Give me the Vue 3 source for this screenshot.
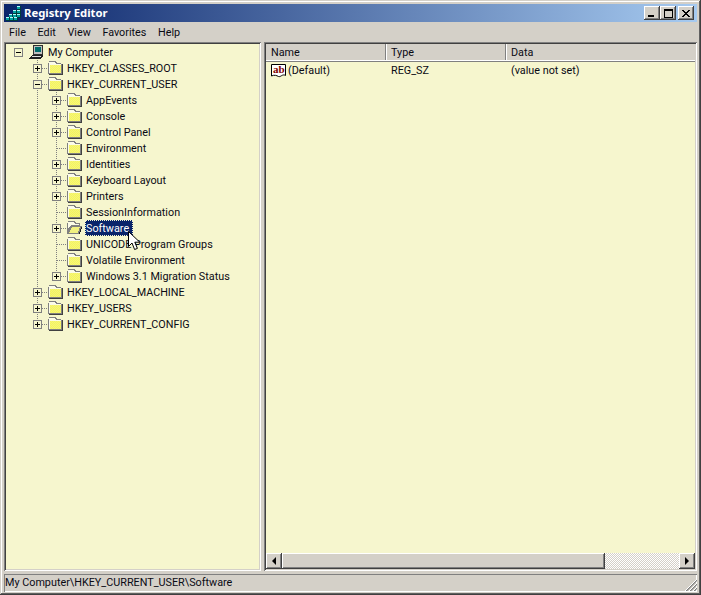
<script setup>
const menus = ['File', 'Edit', 'View', 'Favorites', 'Help']
const raw = [
  ['My Computer', 0, '-', 'pc'],
  ['HKEY_CLASSES_ROOT', 1, '+'],
  ['HKEY_CURRENT_USER', 1, '-'],
  ['AppEvents', 2, '+'],
  ['Console', 2, '+'],
  ['Control Panel', 2, '+'],
  ['Environment', 2, ''],
  ['Identities', 2, '+'],
  ['Keyboard Layout', 2, '+'],
  ['Printers', 2, '+'],
  ['SessionInformation', 2, ''],
  ['Software', 2, '+', 'open'],
  ['UNICODE Program Groups', 2, ''],
  ['Volatile Environment', 2, ''],
  ['Windows 3.1 Migration Status', 2, '+', 'folder', true],
  ['HKEY_LOCAL_MACHINE', 1, '+'],
  ['HKEY_USERS', 1, '+'],
  ['HKEY_CURRENT_CONFIG', 1, '+', 'folder', true],
]
const rows = raw.map(([label, depth, exp, icon = 'folder', last = false]) => {
  const cells = []
  for (let i = 0; i <= depth; i++) {
    if (i === depth) cells.push({ type: depth === 0 ? 'blank' : last ? 'ell' : 'tee', exp })
    else cells.push({ type: i === 1 ? 'pass' : 'blank', exp: '' })
  }
  return { label, icon, cells, selected: label === 'Software' }
})
let dots = ''
for (let y = 5; y < 13; y++) {
  for (let x = 3; x < 14; x++) {
    if ((x + y) % 2 === 0) dots += `M${x} ${y}h1v1h-1z`
  }
}
const cubes = [
  [11, 1], [7, 5], [11, 5], [3, 9], [7, 9], [11, 9], [0, 12], [4, 12], [8, 12],
]
</script>

<template>
  <div class="window">
    <header class="title">
      <svg class="logo" width="16" height="16" viewBox="0 0 16 16" shape-rendering="crispEdges">
        <g v-for="(c, i) in cubes" :key="i">
          <rect :x="c[0]" :y="c[1]" width="4" height="4" fill="#00a0a0" />
          <rect :x="c[0]" :y="c[1]" width="3" height="1" fill="#b8f8f8" />
          <rect :x="c[0] + 3" :y="c[1]" width="1" height="4" fill="#003c3c" />
          <rect :x="c[0]" :y="c[1] + 3" width="4" height="1" fill="#003c3c" />
        </g>
      </svg>
      <span class="title-text">Registry Editor</span>
      <div class="controls">
        <button class="ctl raised">
          <svg width="8" height="8" viewBox="0 0 8 8" shape-rendering="crispEdges"><rect x="0" y="6" width="6" height="2" /></svg>
        </button>
        <button class="ctl raised">
          <svg width="9" height="9" viewBox="0 0 9 9" shape-rendering="crispEdges"><path d="M0 0h9v9H0z M1 2v6h7V2z" fill-rule="evenodd" /></svg>
        </button>
        <button class="ctl raised close">
          <svg width="8" height="7" viewBox="0 0 8 7" shape-rendering="crispEdges"><path d="M0 0h2v1h1v1h2V1h1V0h2v1H7v1H6v1H5v1h1v1h1v1h1v1H6V6H5V5H3v1H2v1H0V6h1V5h1V4h1V3H2V2H1V1H0z" /></svg>
        </button>
      </div>
    </header>

    <nav class="menu">
      <span v-for="m in menus" :key="m" class="menu-item">{{ m }}</span>
    </nav>

    <main class="panes">
      <section class="tree sunken">
        <div v-for="r in rows" :key="r.label" class="row">
          <span v-for="(c, i) in r.cells" :key="i" class="cell" :class="c.type">
            <span v-if="c.exp" class="box">
              <i class="bar-h"></i>
              <i v-if="c.exp === '+'" class="bar-v"></i>
            </span>
          </span>
          <svg v-if="r.icon === 'folder'" class="ico" width="16" height="16" viewBox="0 0 16 16" shape-rendering="crispEdges">
            <path d="M2 1h6l2 2h4v1h1v10H1V3h1z" fill="#808080" />
            <path d="M2 2h5l2 2h5v9H2z" fill="#fbfbe8" />
            <rect x="3" y="5" width="11" height="8" fill="#f4f47c" />
            <path :d="dots" fill="#f6f65c" />
            <rect x="15" y="4" width="1" height="10" fill="#404040" />
            <rect x="2" y="14" width="14" height="1" fill="#404040" />
          </svg>
          <svg v-else-if="r.icon === 'open'" class="ico" width="16" height="16" viewBox="0 0 16 16" shape-rendering="crispEdges">
            <path d="M2 1h6l2 2h4v3H5l-3 5H1V3h1z" fill="#808080" />
            <path d="M2 2h5l2 2h4v1H5L2 9z" fill="#fbfbe8" />
            <path d="M5 6h11v1l-3 7H1v-2z" fill="#808080" />
            <path d="M6 7h8l-2 6H3z" fill="#f0f080" />
            <path d="M15 7h1v1l-2 6h-1z" fill="#202020" />
          </svg>
          <svg v-else class="ico" width="16" height="16" viewBox="0 0 16 16" shape-rendering="crispEdges">
            <path d="M5 1h10v10H5z" fill="#303030" />
            <path d="M6 2h8v8H6z" fill="#c0c0c0" />
            <path d="M7 3h6v5H7z" fill="#006c6c" />
            <path d="M4 11h11v1l-2 3H1v-1z" fill="#202020" />
            <path d="M4 12h9l-1 1H3z" fill="#e0e0e0" />
          </svg>
          <span class="label" :class="{ selected: r.selected }">{{ r.label }}</span>
        </div>
        <svg class="cursor" width="14" height="20" viewBox="0 0 14 20">
          <path d="M0.5 0.5v15l3.5-3.5 2.6 6.5 2.8-1.1-2.6-6.2h5z" fill="#fff" stroke="#000" stroke-width="1" />
        </svg>
      </section>

      <section class="list sunken">
        <div class="head">
          <span class="th name">Name</span>
          <span class="th type">Type</span>
          <span class="th data">Data</span>
        </div>
        <div class="body">
          <div class="tr">
            <span class="td name first">
              <svg class="ab" width="16" height="14" viewBox="0 0 16 14">
                <path d="M0.5 0.5h14v11c-3 -2 -5 2 -7 1s-4 -2 -7 -0.5z" fill="#fff" stroke="#000" />
                <text x="2" y="9" class="ab-text">ab</text>
              </svg>
              <span>(Default)</span>
            </span>
            <span class="td type">REG_SZ</span>
            <span class="td data">(value not set)</span>
          </div>
        </div>
        <div class="hscroll">
          <button class="sb raised"><i class="tri left"></i></button>
          <div class="thumb raised"></div>
          <div class="track"></div>
          <button class="sb raised"><i class="tri right"></i></button>
        </div>
      </section>
    </main>

    <footer class="status">
      <span class="status-text">My Computer\HKEY_CURRENT_USER\Software</span>
      <svg class="grip" width="12" height="12" viewBox="0 0 12 12">
        <g v-for="o in [0, 4, 8]" :key="o">
          <path :d="`M${o + 1} 12 L12 ${o + 1}`" stroke="#808080" stroke-width="1.5" fill="none" />
          <path :d="`M${o} 12 L12 ${o}`" stroke="#ffffff" stroke-width="1" fill="none" />
        </g>
      </svg>
    </footer>
  </div>
</template>

<style scoped>
.window {
  width: 701px;
  height: 595px;
  box-sizing: border-box;
  padding: 4px 4px 3px;
  display: flex;
  flex-direction: column;
  background: #d4d0c8;
  box-shadow: inset -1px -1px #404040, inset 1px 1px #d4d0c8, inset -2px -2px #606060, inset 2px 2px #fff;
  font: 10.8px Roboto, "Noto Sans", sans-serif;
  color: #0a0a14;
}
.title {
  height: 18px;
  display: flex;
  align-items: center;
  background: linear-gradient(90deg, #0a246a, #a6caf0);
  padding: 0 3px 0 2px;
  flex: none;
}
.logo { flex: none; margin-right: 2px; }
.title-text { color: #fff; font: 700 11.3px/16px "Noto Sans", sans-serif; }
.controls { margin-left: auto; display: flex; }
.ctl {
  width: 16px;
  height: 14px;
  padding: 0;
  border: 0;
  display: flex;
  align-items: center;
  justify-content: center;
}
.ctl svg { fill: #000; }
.close { margin-left: 2px; }
.raised {
  background: #d4d0c8;
  box-shadow: inset -1px -1px #404040, inset 1px 1px #fff, inset -2px -2px #808080;
}
.menu {
  height: 20px;
  display: flex;
  align-items: center;
  flex: none;
  padding-left: 5px;
  gap: 11.6px;
}
.panes {
  flex: 1;
  min-height: 0;
  display: flex;
  gap: 3px;
}
.sunken {
  box-shadow: inset 1px 1px #808080, inset -1px -1px #fff, inset 2px 2px #404040, inset -2px -2px #d4d0c8;
}
.tree {
  width: 257px;
  flex: none;
  box-sizing: border-box;
  padding: 2px 2px 2px 5px;
  background: #f6f6ce;
  position: relative;
}
.row {
  height: 16px;
  display: flex;
  align-items: center;
}
.cell {
  width: 19px;
  height: 16px;
  flex: none;
  position: relative;
}
.pass::before, .tee::before, .ell::before {
  content: "";
  position: absolute;
  left: 9px;
  top: 0;
  width: 1px;
  height: 16px;
  background: repeating-linear-gradient(to bottom, #808080 0 1px, transparent 1px 2px);
}
.ell::before { height: 9px; }
.tee::after, .ell::after {
  content: "";
  position: absolute;
  left: 10px;
  top: 8px;
  width: 9px;
  height: 1px;
  background: repeating-linear-gradient(to right, #808080 0 1px, transparent 1px 2px);
}
.box {
  position: absolute;
  left: 5px;
  top: 4px;
  width: 9px;
  height: 9px;
  box-sizing: border-box;
  border: 1px solid #808080;
  background: #f6f6ce;
  z-index: 1;
}
.bar-h { position: absolute; left: 1px; top: 3px; width: 5px; height: 1px; background: #000; }
.bar-v { position: absolute; left: 3px; top: 1px; width: 1px; height: 5px; background: #000; }
.ico { flex: none; }
.label {
  margin-left: 3px;
  padding: 0 4px 0 1px;
  height: 16px;
  line-height: 17px;
  white-space: nowrap;
}
.selected {
  background: #0a246a;
  color: #fff;
  outline: 1px dotted #f6f6ce;
  outline-offset: -1px;
}
.cursor {
  position: absolute;
  left: 124px;
  top: 189px;
}
.list {
  flex: 1;
  min-width: 0;
  box-sizing: border-box;
  padding: 2px;
  display: flex;
  flex-direction: column;
  background: #f6f6ce;
}
.head {
  height: 16px;
  flex: none;
  display: flex;
  background: #d4d0c8;
  border-bottom: 1px solid #fff;
  box-shadow: 0 1px #808080;
}
.th {
  box-sizing: border-box;
  padding-left: 5px;
  line-height: 17px;
  border-right: 1px solid #808080;
  box-shadow: 1px 0 #fff;
}
.name { width: 120px; flex: none; }
.type { width: 120px; flex: none; }
.data { flex: 1; }
.th.data { border-right: 0; box-shadow: none; }
.body { flex: 1; padding-top: 2px; min-height: 0; }
.tr { display: flex; height: 16px; line-height: 16px; }
.td { box-sizing: border-box; padding-left: 5px; white-space: nowrap; }
.first { display: flex; align-items: center; }
.ab { flex: none; margin-right: 1px; }
.ab-text { font: 700 11px "Liberation Serif", serif; fill: #800000; }
.hscroll { height: 16px; flex: none; display: flex; }
.sb {
  width: 16px;
  height: 16px;
  flex: none;
  padding: 0;
  border: 0;
  display: flex;
  align-items: center;
  justify-content: center;
}
.tri { width: 0; height: 0; border-top: 4px solid transparent; border-bottom: 4px solid transparent; }
.tri.left { border-right: 4px solid #000; }
.tri.right { border-left: 4px solid #000; }
.thumb { width: 323px; flex: none; }
.track {
  flex: 1;
  background: repeating-conic-gradient(#d4d0c8 0 25%, #fff 0 50%) 0 0 / 2px 2px;
}
.status {
  height: 18px;
  flex: none;
  margin-top: 3px;
  display: flex;
  align-items: center;
  position: relative;
  box-shadow: inset 1px 1px #808080, inset -1px -1px #fff;
  padding-left: 1px;
}
.status-text { white-space: nowrap; line-height: 16px; padding-bottom: 1px; }
.grip { position: absolute; right: 0; bottom: 1px; }
</style>

<style>
html, body { margin: 0; background: #d4d0c8; overflow: hidden; }
</style>
